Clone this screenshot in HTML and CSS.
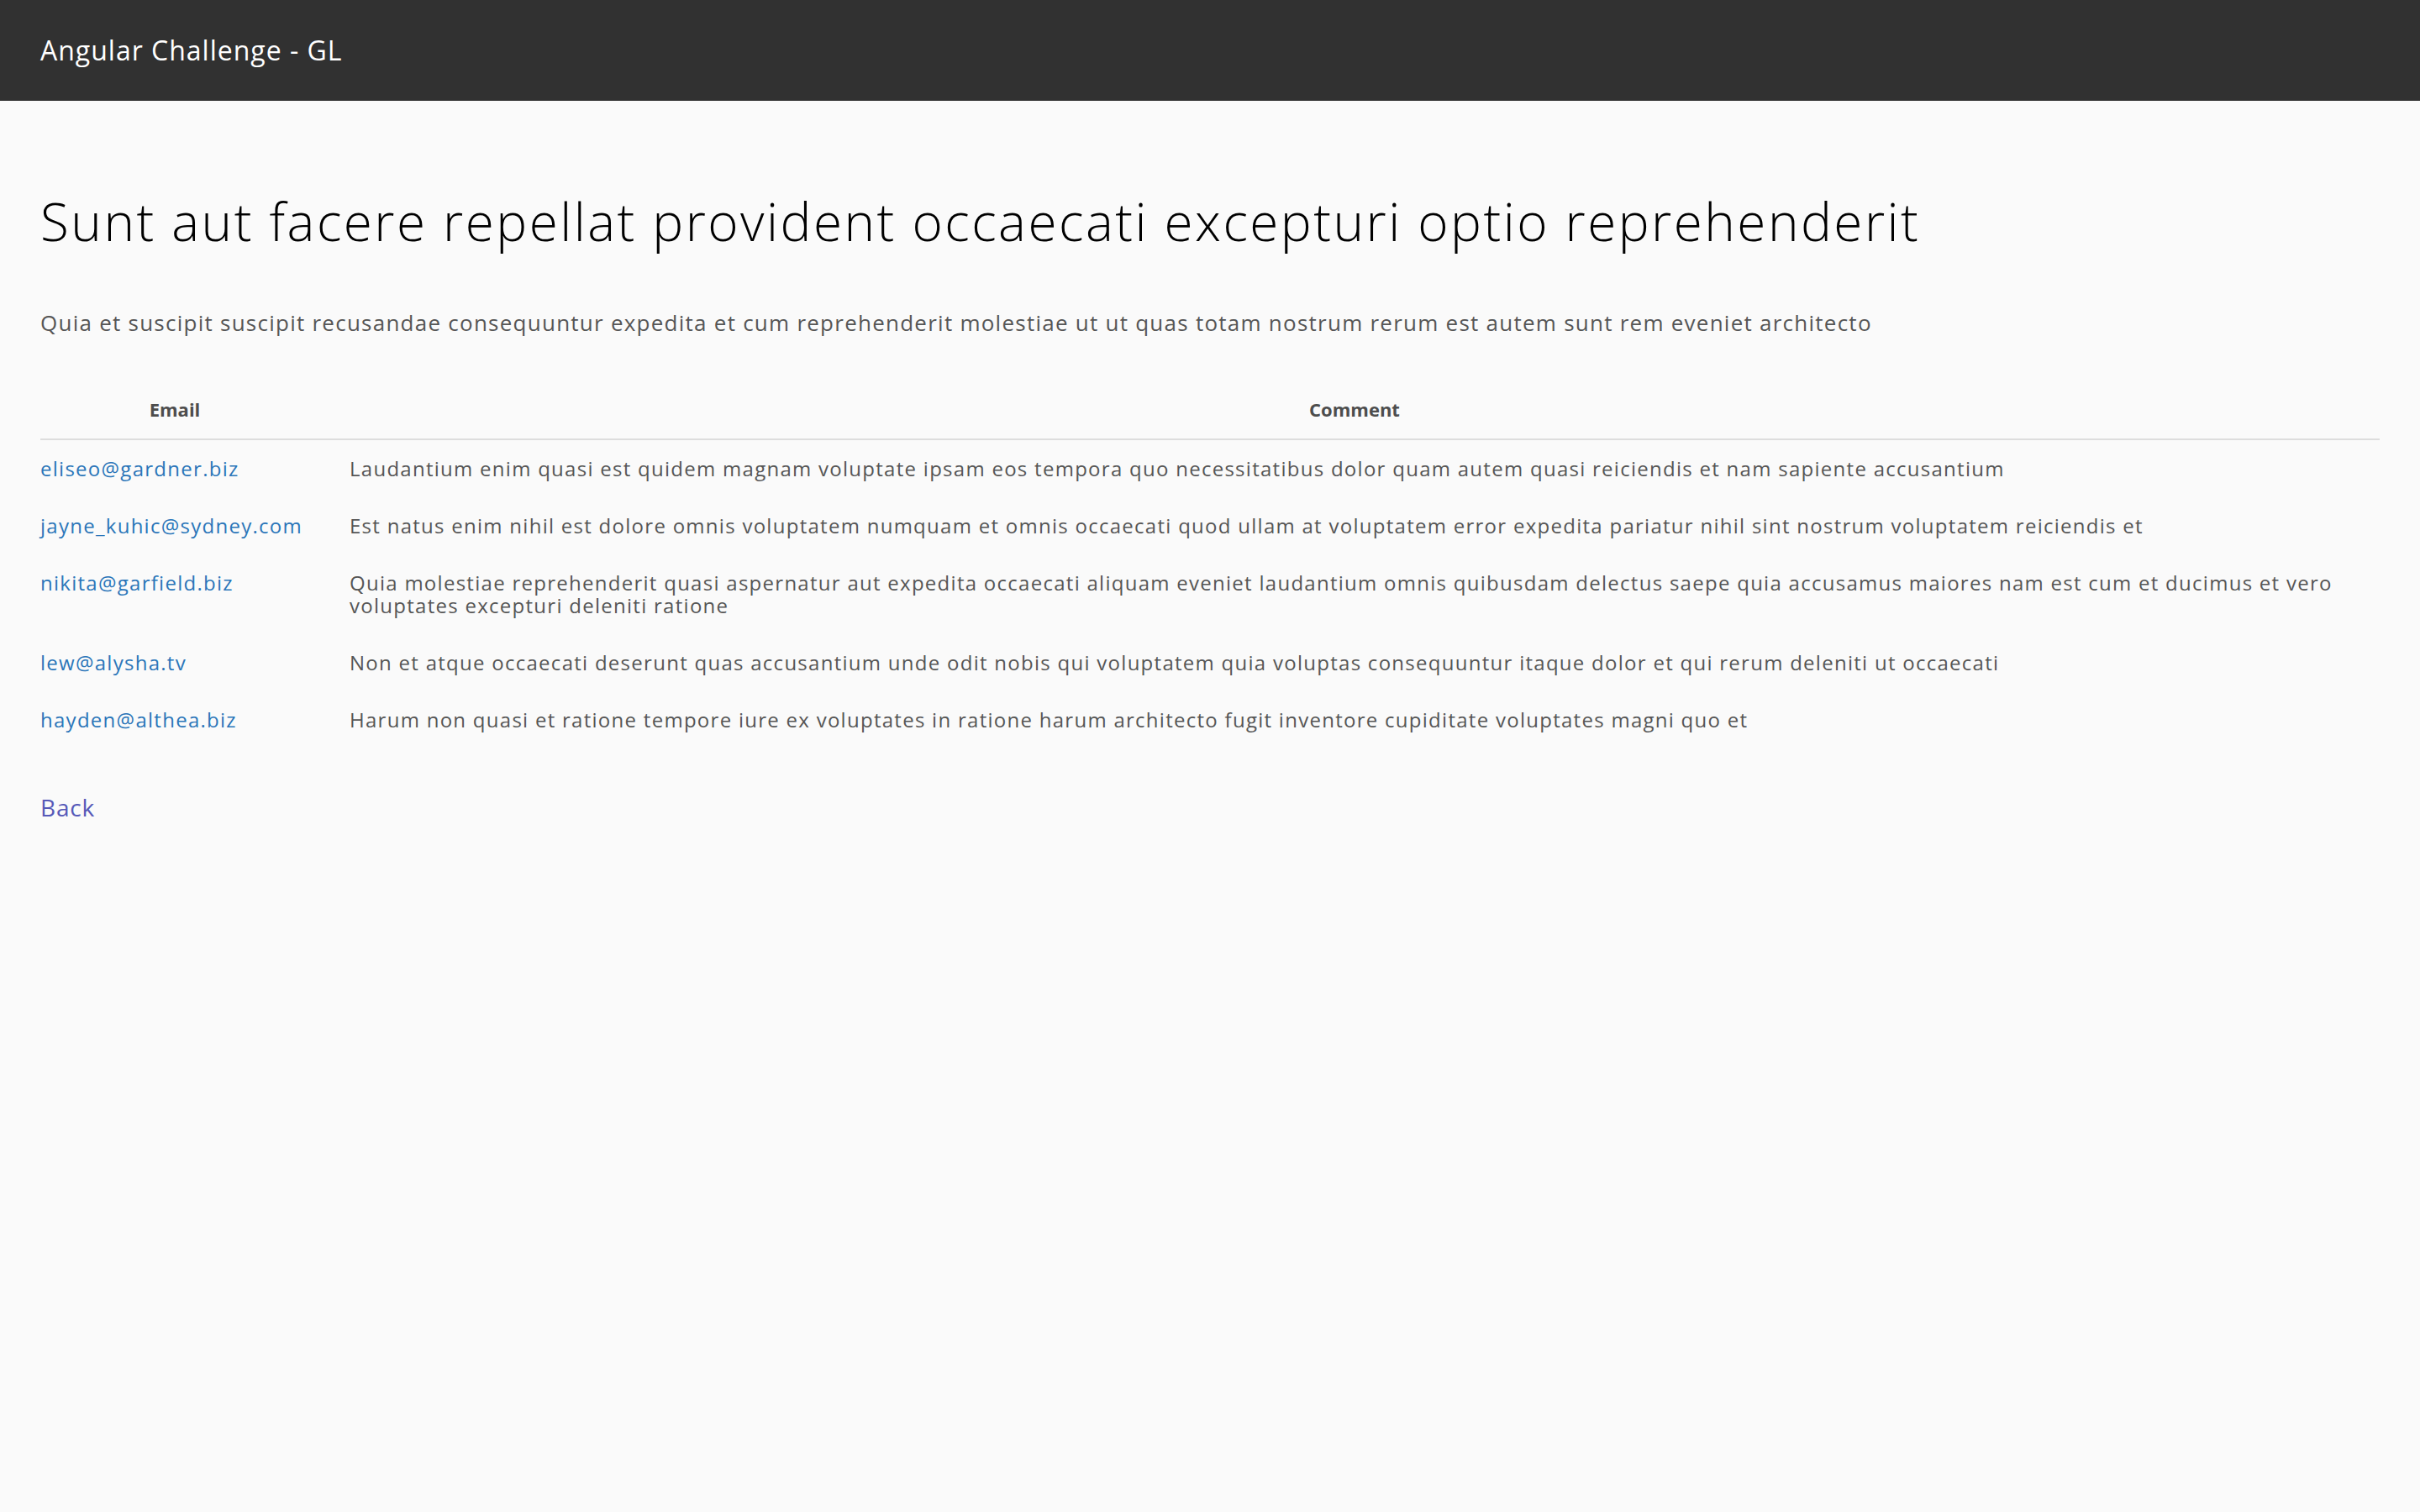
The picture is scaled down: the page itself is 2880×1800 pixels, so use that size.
FILE: index.html
```html
<!DOCTYPE html>
<html lang="en">
<head>
<meta charset="utf-8">
<title>Angular Challenge - GL</title>
<link rel="stylesheet" href="styles.css">
</head>
<body>
<header class="app-header">
  <span class="brand-title">Angular Challenge - GL</span>
</header>
<main class="content">
  <h1 class="post-title">Sunt aut facere repellat provident occaecati excepturi optio reprehenderit</h1>
  <p class="post-body">Quia et suscipit suscipit recusandae consequuntur expedita et cum reprehenderit molestiae ut ut quas totam nostrum rerum est autem sunt rem eveniet architecto</p>
  <table class="comments">
    <thead>
      <tr>
        <th class="col-email">Email</th>
        <th class="col-comment">Comment</th>
      </tr>
    </thead>
    <tbody>
      <tr>
        <td class="cell-email"><a class="email-link" href="#">eliseo@gardner.biz</a></td>
        <td class="cell-comment">Laudantium enim quasi est quidem magnam voluptate ipsam eos tempora quo necessitatibus dolor quam autem quasi reiciendis et nam sapiente accusantium</td>
      </tr>
      <tr>
        <td class="cell-email"><a class="email-link" href="#">jayne_kuhic@sydney.com</a></td>
        <td class="cell-comment">Est natus enim nihil est dolore omnis voluptatem numquam et omnis occaecati quod ullam at voluptatem error expedita pariatur nihil sint nostrum voluptatem reiciendis et</td>
      </tr>
      <tr>
        <td class="cell-email"><a class="email-link" href="#">nikita@garfield.biz</a></td>
        <td class="cell-comment">Quia molestiae reprehenderit quasi aspernatur aut expedita occaecati aliquam eveniet laudantium omnis quibusdam delectus saepe quia accusamus maiores nam est cum et ducimus et vero voluptates excepturi deleniti ratione</td>
      </tr>
      <tr>
        <td class="cell-email"><a class="email-link" href="#">lew@alysha.tv</a></td>
        <td class="cell-comment">Non et atque occaecati deserunt quas accusantium unde odit nobis qui voluptatem quia voluptas consequuntur itaque dolor et qui rerum deleniti ut occaecati</td>
      </tr>
      <tr>
        <td class="cell-email"><a class="email-link" href="#">hayden@althea.biz</a></td>
        <td class="cell-comment">Harum non quasi et ratione tempore iure ex voluptates in ratione harum architecto fugit inventore cupiditate voluptates magni quo et</td>
      </tr>
    </tbody>
  </table>
  <a class="back-link" href="#">Back</a>
</main>
</body>
</html>
```

FILE: styles.css
```css
html, body {
  margin: 0;
  padding: 0;
}

body {
  background: #fafafa;
  font-family: "Open Sans", "Lato", sans-serif;
  font-variant-ligatures: none;
  color: #565656;
  min-height: 1800px;
}

.app-header {
  height: 120px;
  background: #313131;
  display: flex;
  align-items: center;
  padding: 0 48px;
}

.brand-title {
  color: #ffffff;
  font-size: 32px;
  line-height: 1.2;
  font-weight: 400;
  letter-spacing: 0.031em;
}

.content {
  padding: 105px 48px 48px;
  display: flex;
  flex-direction: column;
  align-items: flex-start;
}

.post-title {
  margin: 0;
  font-size: 62px;
  line-height: 76px;
  font-weight: 300;
  color: #000000;
  letter-spacing: 0.04em;
}

.post-body {
  margin: 66px 0 0;
  font-size: 26px;
  line-height: 34px;
  color: #565656;
  letter-spacing: 0.048em;
}

.comments {
  margin-top: 73px;
  width: 100%;
  border-collapse: collapse;
}

.comments th {
  font-size: 22px;
  line-height: 26px;
  font-weight: 700;
  color: #4d4d4d;
  text-align: center;
  padding: 0 0 22px;
  border-bottom: 2px solid #dddddd;
}

.comments .col-email {
  width: 320px;
}

.comments .col-comment {
  padding-left: 24px;
}

.comments td {
  font-size: 24px;
  line-height: 27px;
  padding: 20px 0 21px;
  vertical-align: top;
  text-align: left;
  letter-spacing: 0.053em;
}

.cell-email {
  white-space: nowrap;
}

.cell-comment {
  padding-left: 48px !important;
  color: #565656;
}

.email-link {
  color: #2b76b9;
  text-decoration: none;
}

.back-link {
  margin-top: 53px;
  font-size: 28px;
  line-height: 34px;
  color: #5659b8;
  text-decoration: none;
  letter-spacing: 0.03em;
}
```
